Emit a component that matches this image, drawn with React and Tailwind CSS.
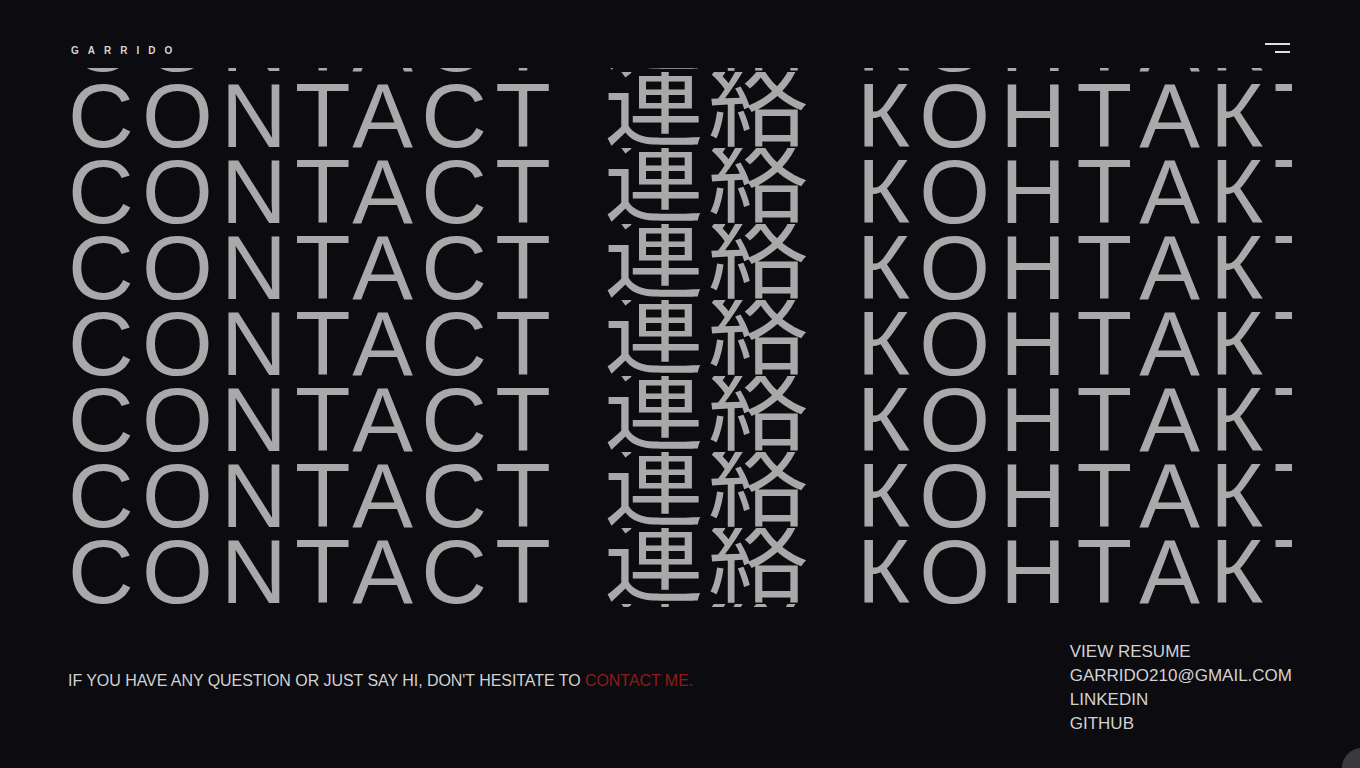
import React from 'react';

const ROWS = 9;

const ContactRow = () => (
    <div className="flex h-[76px] shrink-0 items-end overflow-hidden whitespace-nowrap text-[#a9a9a9]">
        <span className="w-[536px] shrink-0 text-[91px] leading-[91px] tracking-[8.3px] mb-[-13px]">CONTACT</span>
        <span className="w-[253px] shrink-0 text-[100px] leading-[100px] tracking-[4px] mb-[3px] font-['Noto_Sans_CJK_JP',sans-serif]">連絡</span>
        <span className="shrink-0 text-[91px] leading-[91px] tracking-[10.3px] mb-[-13px]">КОНТАКТ</span>
    </div>
);

export default function App() {
    const rows = Array.from({ length: ROWS }, (_, i) => i);

    return (
        <div className="relative flex h-[768px] w-full flex-col overflow-hidden bg-[#0b0b10] px-[68px] font-['Liberation_Sans','Noto_Sans_CJK_JP',sans-serif]">
            <header className="flex h-[68px] shrink-0 items-start justify-between">
                <div className="mt-[46px] pl-[3px] text-[10px] font-bold leading-[10px] tracking-[9px] text-[#d4d4d4]">GARRIDO</div>
                <button className="mr-[2px] mt-[43px] flex w-[25px] flex-col items-end gap-[6px]">
                    <span className="block h-[2px] w-[25px] bg-[#e0e0e0]"></span>
                    <span className="block h-[2px] w-[15px] bg-[#e0e0e0]"></span>
                </button>
            </header>

            <div className="h-[539px] shrink-0 overflow-hidden">
                <div className="mt-[-72px] flex flex-col">
                    {rows.map(i => <ContactRow key={i} />)}
                </div>
            </div>

            <footer className="flex flex-1 items-start justify-between">
                <p className="mt-[62px] text-[16px] leading-[24px] tracking-[-0.05px] text-[#d2d2d2]">
                    IF YOU HAVE ANY QUESTION OR JUST SAY HI, DON'T HESITATE TO <a href="#" className="text-[#8e1c1c]">CONTACT ME.</a>
                </p>
                <ul className="mt-[33px] flex flex-col text-[17px] leading-[24px] text-[#d2d2d2]">
                    <li><a href="#">VIEW RESUME</a></li>
                    <li><a href="#">GARRIDO210@GMAIL.COM</a></li>
                    <li><a href="#">LINKEDIN</a></li>
                    <li><a href="#">GITHUB</a></li>
                </ul>
            </footer>

            <div className="absolute left-[1342px] top-[748px] h-[40px] w-[40px] rounded-full bg-[#3a3a3e]"></div>
        </div>
    );
}
